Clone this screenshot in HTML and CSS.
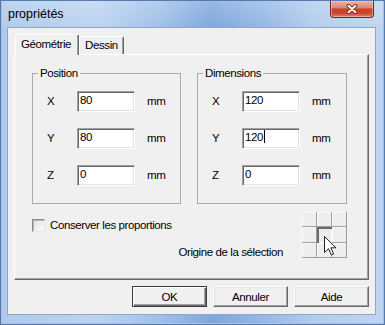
FILE: index.html
```html
<!DOCTYPE html>
<html lang="fr">
<head>
<meta charset="utf-8">
<title>propriétés</title>
<link rel="stylesheet" href="styles.css">
</head>
<body>
<div class="window">
  <div class="titlebar">
    <span class="title">propriétés</span>
    <div class="close" aria-label="Fermer">
      <svg width="12" height="10" viewBox="0 0 12 10"><path d="M2.5 1.8 L9.5 8.2 M9.5 1.8 L2.5 8.2" stroke="#6a2218" stroke-width="3.6" stroke-linecap="round"/><path d="M2.5 1.8 L9.5 8.2 M9.5 1.8 L2.5 8.2" stroke="#fff" stroke-width="2" stroke-linecap="round"/></svg>
    </div>
  </div>
  <div class="client">
    <div class="tabs">
      <div class="tab selected">Géométrie</div>
      <div class="tab">Dessin</div>
    </div>
    <div class="panel">
      <div class="groups">
        <fieldset class="group group-pos">
          <legend>Position</legend>
          <div class="rows">
            <span class="axis">X</span><div class="field">80</div><span class="unit">mm</span>
            <span class="axis">Y</span><div class="field">80</div><span class="unit">mm</span>
            <span class="axis">Z</span><div class="field">0</div><span class="unit">mm</span>
          </div>
        </fieldset>
        <fieldset class="group group-dim">
          <legend>Dimensions</legend>
          <div class="rows">
            <span class="axis">X</span><div class="field">120</div><span class="unit">mm</span>
            <span class="axis">Y</span><div class="field">120<span class="caret"></span></div><span class="unit">mm</span>
            <span class="axis">Z</span><div class="field">0</div><span class="unit">mm</span>
          </div>
        </fieldset>
      </div>
      <div class="lower">
        <label class="check"><span class="box"></span>Conserver les proportions</label>
        <div class="origin">
          <span class="origin-label">Origine de la sélection</span>
          <div class="grid">
            <span class="cell"></span><span class="cell"></span><span class="cell"></span>
            <span class="cell"></span><span class="cell pressed"></span><span class="cell"></span>
            <span class="cell"></span><span class="cell"></span><span class="cell"></span>
            <svg class="cursor" width="13" height="20" viewBox="0 0 13 20"><path d="M0.5 0.5 L0.5 16.5 L4.5 12.7 L7.3 19 L9.6 18 L6.9 11.8 L12 11.8 Z" fill="#fff" stroke="#222" stroke-width="1" stroke-linejoin="miter"/></svg>
          </div>
        </div>
      </div>
    </div>
    <div class="buttons">
      <button class="btn default">OK</button>
      <button class="btn">Annuler</button>
      <button class="btn">Aide</button>
    </div>
  </div>
</div>
</body>
</html>
```
FILE: styles.css
```css
* { box-sizing: border-box; }
html, body { margin: 0; padding: 0; }
body {
  width: 385px;
  height: 325px;
  overflow: hidden;
  font-family: "Liberation Sans", Arial, sans-serif;
  font-size: 11.5px;
  letter-spacing: -0.4px;
  color: #000;
  background: #fff;
}

.window {
  width: 385px;
  height: 325px;
  display: flex;
  flex-direction: column;
  padding: 0 8px 9px 6px;
  border: 1px solid #557aae;
  background:
    linear-gradient(to bottom, rgba(255,255,255,0.2), rgba(255,255,255,0) 28px),
    linear-gradient(to right, #afcaec 0%, #bcd4f0 25%, #9fbfe8 42%, #7fa6dc 55%, #94b7e4 68%, #b3cdee 82%, #bfd5f0 100%);
  box-shadow: inset 1px 0 0 #a4c0e8, inset -1px 0 0 #a4c0e8, inset 0 -1px 0 #a4c0e8;
}

.titlebar {
  height: 26px;
  display: flex;
  justify-content: space-between;
  align-items: flex-start;
}
.title {
  font-size: 12.5px;
  letter-spacing: 0;
  line-height: 14px;
  margin: 6px 0 0 1px;
  color: #000;
}
.close {
  width: 44px;
  height: 17px;
  margin-right: 2px;
  display: flex;
  align-items: center;
  justify-content: center;
  border: 1px solid #6e2a20;
  border-top: none;
  border-radius: 0 0 4px 4px;
  background: linear-gradient(to bottom, #eab1a5 0%, #dc8a79 40%, #c8422e 52%, #c9452f 75%, #e0806b 100%);
  box-shadow: inset 0 0 0 1px rgba(255,220,210,0.45);
}

.client {
  flex: 1;
  display: flex;
  flex-direction: column;
  padding: 6px 6px 0 6px;
  background: #f0f0f0;
  border: 1px solid #8ea6c8;
}

.tabs {
  display: flex;
  align-items: flex-end;
  height: 21px;
  margin-bottom: -1px;
  position: relative;
  z-index: 1;
}
.tab {
  height: 18px;
  margin-bottom: 1px;
  padding: 0 5px 0 5px;
  line-height: 16px;
  background: #f0f0f0;
  border-top: 1px solid #fff;
  border-left: 1px solid #fff;
  border-right: 1px solid #696969;
  box-shadow: inset -1px 0 0 #a0a0a0;
  border-radius: 2px 2px 0 0;
}
.tab.selected {
  height: 21px;
  margin-bottom: 0;
  margin-left: 1px;
  padding: 0 7px 0 5px;
  line-height: 19px;
}

.panel {
  height: 226px;
  padding: 12px 0 0 17px;
  background: #f0f0f0;
  border-top: 1px solid #fff;
  border-left: 1px solid #fff;
  border-right: 1px solid #696969;
  border-bottom: 1px solid #696969;
  box-shadow: inset -1px -1px 0 #a0a0a0;
}

.groups {
  display: flex;
  gap: 16px;
}
.group {
  margin: 0;
  padding: 0;
  border: 1px solid #a9a9a9;
  min-inline-size: 0;
}
.group-pos { width: 149px; }
.group-dim { width: 150px; }
.group legend {
  margin-left: 5px;
  padding: 0 2px;
  line-height: 13px;
}
.rows {
  display: grid;
  grid-template-columns: 18px 58px auto;
  column-gap: 12px;
  row-gap: 16px;
  align-items: center;
  padding: 11px 0 17px 14px;
}
.axis, .unit { line-height: 13px; }

.field {
  height: 21px;
  padding: 0 2px;
  line-height: 16px;
  background: #fff;
  border: 1px solid;
  border-color: #a0a0a0 #fff #fff #a0a0a0;
  box-shadow: inset 1px 1px 0 #696969, inset -1px -1px 0 #e3e3e3;
  white-space: nowrap;
}
.caret {
  display: inline-block;
  width: 1px;
  height: 13px;
  margin-left: 1px;
  vertical-align: -2px;
  background: #000;
}

.lower {
  display: flex;
  justify-content: space-between;
  align-items: flex-start;
  margin-top: 8px;
  padding-right: 21px;
}
.check {
  display: flex;
  align-items: center;
  gap: 5px;
  margin-top: 7px;
  line-height: 13px;
}
.box {
  width: 13px;
  height: 13px;
  border: 1px solid;
  border-color: #8a8a8a #e8e8e8 #e8e8e8 #8a8a8a;
  background: linear-gradient(135deg, #dcdcdc, #f7f7f7 70%);
  box-shadow: inset 1px 1px 0 #b8b8b8;
}

.origin {
  display: flex;
  align-items: flex-end;
  gap: 19px;
}
.origin-label {
  line-height: 13px;
  margin-bottom: -1px;
}
.grid {
  position: relative;
  display: grid;
  grid-template-columns: repeat(3, 15px);
  grid-template-rows: 15px 16px 15px;
}
.cell {
  background: #eeeeee;
  box-shadow: inset -1px -1px 0 #9d9d9d, inset 1px 1px 0 #fafafa;
}
.cell.pressed {
  background: #ececec;
  box-shadow: inset 2px 2px 0 #6a6a6a, inset -1px -1px 0 #fafafa;
}
.cursor {
  position: absolute;
  left: 22px;
  top: 24px;
}

.buttons {
  display: flex;
  justify-content: flex-end;
  gap: 6px;
  margin-top: 6px;
}
.btn {
  width: 75px;
  height: 21px;
  padding: 0;
  font: inherit;
  letter-spacing: inherit;
  color: #000;
  background: #f0f0f0;
  border: 1px solid;
  border-color: #fff #696969 #696969 #fff;
  box-shadow: inset -1px -1px 0 #a0a0a0, inset 1px 1px 0 #e3e3e3;
  border-radius: 0;
}
.btn.default {
  border: 1px solid #3c3c3c;
  box-shadow: inset 1px 1px 0 #fff, inset -1px -1px 0 #696969, inset -2px -2px 0 #a0a0a0;
}
```
